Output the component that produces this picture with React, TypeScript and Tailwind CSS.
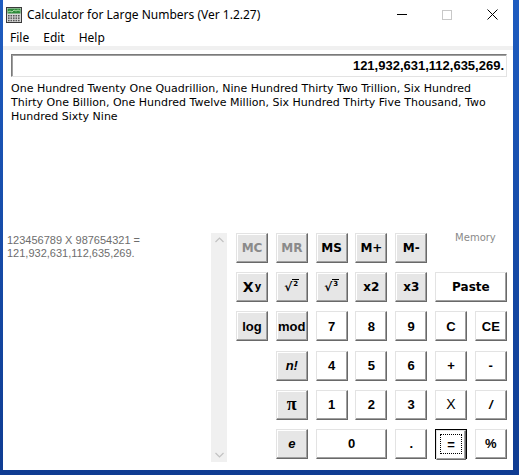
import React from "react";

function Btn({
  children,
  gray,
  className = "",
}: {
  children: React.ReactNode;
  gray?: boolean;
  className?: string;
}) {
  return (
    <div
      className={`flex items-center justify-center h-[30px] border border-t-[#e3e3e3] border-l-[#e3e3e3] border-r-[#696969] border-b-[#696969] shadow-[inset_-1px_-1px_0_#a0a0a0,inset_1px_1px_0_#ffffff] ${
        gray ? "bg-[#e6e6e6]" : "bg-white"
      } ${className}`}
    >
      {children}
    </div>
  );
}

const fn = "font-['Liberation_Sans',sans-serif] font-bold text-[13px] text-black";
const tah = "font-['DejaVu_Sans',sans-serif] font-bold text-[12px]";

function AppIcon() {
  return (
    <svg width="16" height="16" viewBox="0 0 16 16">
      <rect x="0.5" y="0.5" width="15" height="15" fill="#d8d8d8" stroke="#3a3a3a" />
      <rect x="1.5" y="1.5" width="13" height="5" fill="#2e8b3a" />
      <polyline points="2,5 4,4 6,5 8,3 10,4 12,3 14,4" fill="none" stroke="#c8f0c0" strokeWidth="0.8" />
      {[0, 1, 2].map((r) =>
        [0, 1, 2, 3, 4].map((c) => (
          <rect key={`${r}-${c}`} x={2 + c * 2.5} y={8 + r * 2.4} width="1.6" height="1.5" fill="#555" />
        ))
      )}
    </svg>
  );
}

export default function App() {
  return (
    <div className="w-[519px] h-[475px] bg-gradient-to-b from-[#1e5cc0] to-[#0f3c92] overflow-hidden">
      <div className="ml-[3px] w-[510px] h-[470px] bg-white flex flex-col">
        {/* Title bar */}
        <div className="h-[29px] flex items-center shrink-0">
          <div className="ml-[3px] w-[16px] h-[16px]">
            <AppIcon />
          </div>
          <div className="ml-[5px] text-[12px] text-black font-['Noto_Sans',sans-serif] leading-none">
            Calculator for Large Numbers (Ver 1.2.27)
          </div>
          <div className="ml-auto flex items-center gap-[35px] pr-[15px]">
            <div className="w-[10px] h-[1px] bg-black" />
            <div className="w-[10px] h-[10px] border border-[#c8c8c8]" />
            <svg width="11" height="11" viewBox="0 0 11 11">
              <path d="M0.5 0.5 L10.5 10.5 M10.5 0.5 L0.5 10.5" stroke="#000" strokeWidth="1" />
            </svg>
          </div>
        </div>
        {/* Menu */}
        <div className="h-[17px] flex items-center pl-[7px] gap-[14px] text-[12px] text-black font-['Noto_Sans',sans-serif] shrink-0">
          <span>File</span>
          <span>Edit</span>
          <span>Help</span>
        </div>
        <div className="h-[4px] bg-[#f0f0f0] shrink-0" />
        {/* Display */}
        <div className="mt-[4px] ml-[8px] w-[496px] h-[23px] border border-t-[#7a7a7a] border-l-[#7a7a7a] border-r-[#e3e3e3] border-b-[#e3e3e3] shadow-[inset_1px_1px_0_#a0a0a0] flex items-center justify-end pr-[2px] shrink-0">
          <span className="font-['Liberation_Sans',sans-serif] font-bold text-[13px] text-black">
            121,932,631,112,635,269.
          </span>
        </div>
        {/* Words */}
        <div className="mt-[5px] ml-[8px] h-[151px] font-['DejaVu_Sans',sans-serif] text-[11px] leading-[14px] text-black shrink-0">
          One Hundred Twenty One Quadrillion, Nine Hundred Thirty Two Trillion, Six Hundred
          <br />
          Thirty One Billion, One Hundred Twelve Million, Six Hundred Thirty Five Thousand, Two
          <br />
          Hundred Sixty Nine
        </div>
        {/* Bottom */}
        <div className="flex">
          <div className="w-[208px] pl-[4px] pt-[1px] font-['Liberation_Sans',sans-serif] text-[11px] leading-[13px] text-[#6d6d6d]">
            123456789 X 987654321 =
            <br />
            121,932,631,112,635,269.
          </div>
          <div className="w-[16px] h-[229px] bg-[#f0f0f0] flex flex-col items-center justify-between py-[4px]">
            <svg width="9" height="6" viewBox="0 0 9 6">
              <path d="M0.5 5 L4.5 1 L8.5 5" fill="none" stroke="#c2c2c2" strokeWidth="1.2" />
            </svg>
            <svg width="9" height="6" viewBox="0 0 9 6">
              <path d="M0.5 1 L4.5 5 L8.5 1" fill="none" stroke="#c2c2c2" strokeWidth="1.2" />
            </svg>
          </div>
          <div className="ml-[9px] grid grid-cols-[repeat(7,32px)] grid-rows-[repeat(6,30px)] gap-x-[7.8px] gap-y-[9.2px]">
            {/* Row 1 */}
            <Btn gray><span className={`${tah} text-[#8a8a8a]`}>MC</span></Btn>
            <Btn gray><span className={`${tah} text-[#8a8a8a]`}>MR</span></Btn>
            <Btn gray><span className={`${tah} text-black`}>MS</span></Btn>
            <Btn gray><span className={`${tah} text-black`}>M+</span></Btn>
            <Btn gray><span className={`${tah} text-black`}>M-</span></Btn>
            <div className="col-span-2 flex justify-end pr-[11px] -mt-[3px]">
              <span className="font-['DejaVu_Sans',sans-serif] text-[10px] text-[#8a8a8a]">Memory</span>
            </div>
            {/* Row 2 */}
            <Btn gray>
              <span className={`${tah} text-[14px] text-black`}>
                X<sup className="text-[10px] relative -top-[2px] ml-[1px]">y</sup>
              </span>
            </Btn>
            <Btn gray>
              <span className={`${tah} text-black flex items-start`}>
                <span className="text-[12px]">√</span>
                <span className="text-[7px] border-t border-black leading-[9px] mt-[1px] px-[1px]">2</span>
              </span>
            </Btn>
            <Btn gray>
              <span className={`${tah} text-black flex items-start`}>
                <span className="text-[12px]">√</span>
                <span className="text-[7px] border-t border-black leading-[9px] mt-[1px] px-[1px]">3</span>
              </span>
            </Btn>
            <Btn gray><span className={`${tah} text-black`}>x2</span></Btn>
            <Btn gray><span className={`${tah} text-black`}>x3</span></Btn>
            <Btn className="col-span-2"><span className={`${tah} text-black`}>Paste</span></Btn>
            {/* Row 3 */}
            <Btn gray><span className={fn}>log</span></Btn>
            <Btn gray><span className={fn}>mod</span></Btn>
            <Btn><span className={fn}>7</span></Btn>
            <Btn><span className={fn}>8</span></Btn>
            <Btn><span className={fn}>9</span></Btn>
            <Btn><span className={fn}>C</span></Btn>
            <Btn><span className={fn}>CE</span></Btn>
            {/* Row 4 */}
            <div />
            <Btn gray><span className={`${fn} italic text-[12px]`}>n!</span></Btn>
            <Btn><span className={fn}>4</span></Btn>
            <Btn><span className={fn}>5</span></Btn>
            <Btn><span className={fn}>6</span></Btn>
            <Btn><span className={fn}>+</span></Btn>
            <Btn><span className={fn}>-</span></Btn>
            {/* Row 5 */}
            <div />
            <Btn gray><span className="font-['Liberation_Serif',serif] font-bold text-[18px] text-black">π</span></Btn>
            <Btn><span className={fn}>1</span></Btn>
            <Btn><span className={fn}>2</span></Btn>
            <Btn><span className={fn}>3</span></Btn>
            <Btn><span className={`${fn} font-normal text-[14px]`}>X</span></Btn>
            <Btn><span className={`${fn} italic`}>/</span></Btn>
            {/* Row 6 */}
            <div />
            <Btn gray><span className={`${fn} italic`}>e</span></Btn>
            <Btn className="col-span-2"><span className={fn}>0</span></Btn>
            <Btn><span className={fn}>.</span></Btn>
            <div className="relative border border-black h-[30px]">
              <Btn className="h-[28px]">
                <span className={fn}>=</span>
              </Btn>
              <div className="absolute inset-[4px] border border-dotted border-black" />
            </div>
            <Btn><span className={fn}>%</span></Btn>
          </div>
        </div>
      </div>
    </div>
  );
}
